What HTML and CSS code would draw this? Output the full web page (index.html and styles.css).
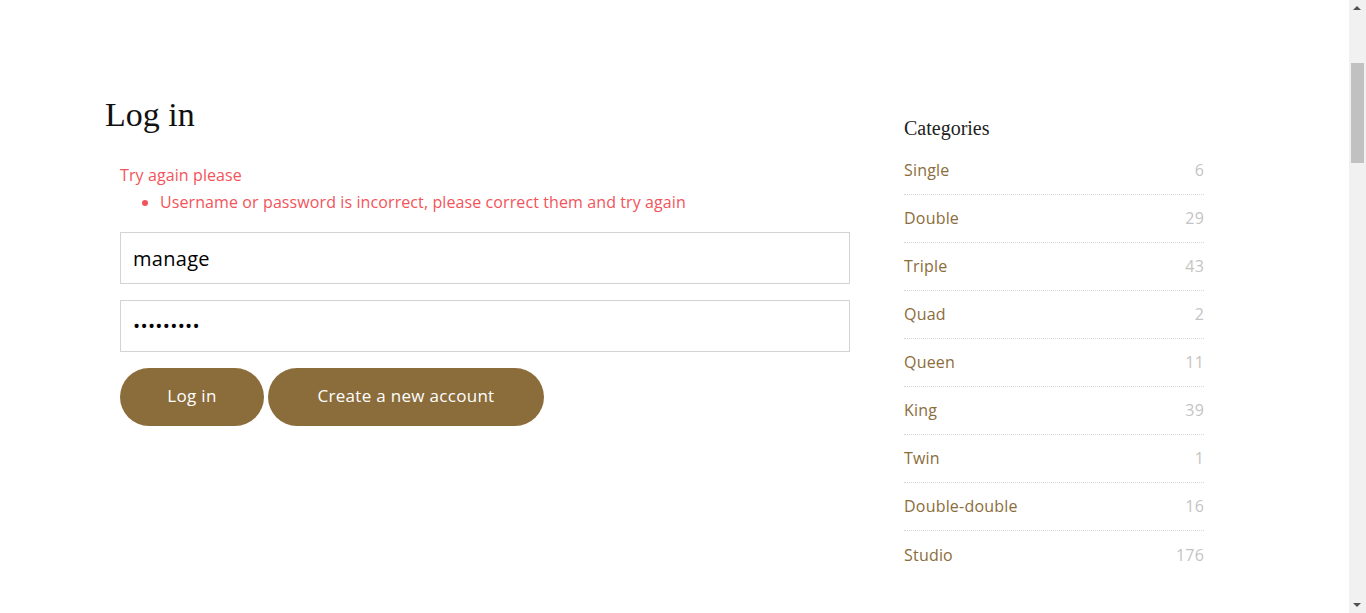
FILE: index.html
```html
<!DOCTYPE html>
<html lang="en">
<head>
<meta charset="utf-8">
<title>Log in</title>
<link rel="stylesheet" href="styles.css">
</head>
<body>
<div class="page">
  <main class="main">
    <h1 class="title">Log in</h1>
    <div class="errors">
      <p class="err-head">Try again please</p>
      <ul class="err-list">
        <li>Username or password is incorrect, please correct them and try again</li>
      </ul>
    </div>
    <form class="form">
      <input class="field" type="text" value="manage">
      <input class="field field-pass" type="password" value="123456789">
      <div class="actions">
        <button class="btn btn-login" type="button">Log in</button>
        <button class="btn btn-create" type="button">Create a new account</button>
      </div>
    </form>
  </main>
  <aside class="sidebar">
    <h2 class="side-title">Categories</h2>
    <ul class="cats">
      <li class="cat"><span class="cat-name">Single</span><span class="cat-count">6</span></li>
      <li class="cat"><span class="cat-name">Double</span><span class="cat-count">29</span></li>
      <li class="cat"><span class="cat-name">Triple</span><span class="cat-count">43</span></li>
      <li class="cat"><span class="cat-name">Quad</span><span class="cat-count">2</span></li>
      <li class="cat"><span class="cat-name">Queen</span><span class="cat-count">11</span></li>
      <li class="cat"><span class="cat-name">King</span><span class="cat-count">39</span></li>
      <li class="cat"><span class="cat-name">Twin</span><span class="cat-count">1</span></li>
      <li class="cat"><span class="cat-name">Double-double</span><span class="cat-count">16</span></li>
      <li class="cat"><span class="cat-name">Studio</span><span class="cat-count">176</span></li>
    </ul>
  </aside>
</div>
<div class="scrollbar" aria-hidden="true">
  <span class="sb-arrow sb-up"></span>
  <span class="sb-thumb"></span>
  <span class="sb-arrow sb-down"></span>
</div>
</body>
</html>
```

FILE: styles.css
```css
html, body {
  margin: 0;
  padding: 0;
  background: #fff;
}
body {
  font-family: "Open Sans", "Liberation Sans", sans-serif;
  color: #222;
  overflow: hidden;
}
.page {
  display: flex;
  padding: 92px 0 0 105px;
}
.main {
  width: 760px;
}
.title {
  margin: 0;
  font-family: "Liberation Serif", "DejaVu Serif", serif;
  font-weight: 400;
  font-size: 34px;
  line-height: 46px;
  color: #111;
}
.errors {
  margin: 24px 0 0 15px;
  color: #f2545b;
  font-size: 16px;
  letter-spacing: 0.1px;
  line-height: 27px;
}
.err-head {
  margin: 0;
}
.err-list {
  margin: 0;
  padding-left: 40px;
}
.form {
  margin: 16px 0 0 15px;
  display: flex;
  flex-direction: column;
  gap: 16px;
}
.field {
  box-sizing: border-box;
  width: 730px;
  height: 52px;
  border: 1px solid #d2d2d7;
  padding: 0 12px;
  font-family: "Open Sans", "Liberation Sans", sans-serif;
  font-size: 20px;
  letter-spacing: 0.3px;
  color: #000;
  background: #fff;
  outline: none;
}
.field-pass {
  font-size: 19px;
}
.actions {
  display: flex;
  gap: 4px;
}
.btn {
  height: 58px;
  border: 0;
  border-radius: 29px;
  background: #8b6d3b;
  color: #fff;
  font-family: "Open Sans", "Liberation Sans", sans-serif;
  font-size: 17px;
  letter-spacing: 0.3px;
  padding: 0 0 3px;
}
.btn-login {
  width: 144px;
}
.btn-create {
  width: 276px;
}
.sidebar {
  margin-left: 39px;
  width: 300px;
  padding-top: 23px;
}
.side-title {
  margin: 0;
  font-family: "Liberation Serif", "DejaVu Serif", serif;
  font-weight: 400;
  font-size: 20px;
  line-height: 26px;
  color: #222;
}
.cats {
  list-style: none;
  margin: 6px 0 0;
  padding: 0;
}
.cat {
  display: flex;
  justify-content: space-between;
  align-items: center;
  height: 47px;
  padding-bottom: 1px;
  box-sizing: border-box;
  border-bottom: 1px dotted #d6d6d6;
  font-size: 16px;
  letter-spacing: 0.2px;
}
.cat {
  height: 48px;
}
.cat:last-child {
  border-bottom: 0;
}
.cat-name {
  color: #8b6d3b;
}
.cat-count {
  color: #c4c4c4;
}
.scrollbar {
  position: fixed;
  top: 0;
  right: 0;
  width: 17px;
  height: 100vh;
  background: #f1f1f1;
}
.sb-thumb {
  position: absolute;
  left: 2px;
  top: 63px;
  width: 13px;
  height: 100px;
  background: #c1c1c1;
}
.sb-arrow {
  position: absolute;
  left: 4px;
  width: 0;
  height: 0;
  border-left: 4px solid transparent;
  border-right: 4px solid transparent;
}
.sb-up {
  top: 6px;
  border-bottom: 4px solid #505050;
}
.sb-down {
  bottom: 6px;
  border-top: 4px solid #505050;
}
```
